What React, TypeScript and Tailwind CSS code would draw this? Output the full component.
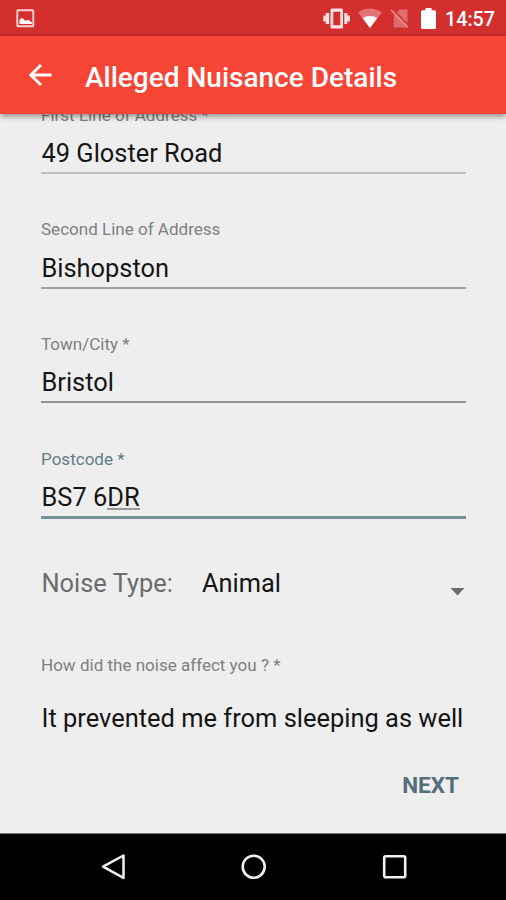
import React from "react";

function StatusBar() {
  return (
    <div className="flex h-[36px] items-center justify-between bg-[#d32f2f] pl-[16px] pr-[11px] text-white">
      <svg width="19" height="19" viewBox="0 0 19 19" fill="none">
        <rect x="1.3" y="1.3" width="16" height="16" stroke="#fbd0d2" strokeWidth="1.9" rx="0.6" />
        <path d="M3.500 14.900V11l2-1.900 1.500.4 1.500 1.800 2 .2 2-.4 2 1.500 1.400.3v2z" fill="#fff" />
      </svg>
      <div className="flex items-center">
        <svg width="27" height="21" viewBox="0 0 27 21" fill="#fbe0e0">
          <path fillRule="evenodd" d="M9 .5h9.500q1.500 0 1.500 1.500v17q0 1.500-1.500 1.500H9q-1.500 0-1.500-1.500V2Q7.500.5 9 .5zM10.300 3.800v13.400h7V3.800z" />
          <path d="M2.800 5H6.200v11H2.800zM.3 7.500h2.500v6H.3zM21.300 5h3v11h-3zM24.300 7.500h2.600v6h-2.600z" />
        </svg>
        <svg className="ml-[8px]" width="24" height="20" viewBox="0 0 24 20">
          <path d="M12 20L0 4.500C7 -1 17 -1 24 4.500z" fill="#fff" opacity=".33" />
          <path d="M12 20L4.800 10.300c4-3.200 10.400-3.200 14.400 0z" fill="#fff" />
        </svg>
        <svg className="ml-[8px]" width="20" height="21" viewBox="0 0 20 21">
          <path d="M17.500 1.500H9.500L3.800 7.200v12.300h13.700z" fill="#fff" opacity=".3" />
          <path d="M1 1.800L18 19.500" stroke="#d32f2f" strokeWidth="1.500" transform="translate(1.300 -1.300)" />
          <path d="M1 1.800L18 19.500" stroke="#e88a8a" strokeWidth="1.700" />
        </svg>
        <svg className="ml-[11px]" width="15" height="21" viewBox="0 0 15 21" fill="#fff">
          <path d="M4.500 0h6v2.200h3q1.500 0 1.500 1.500V19.500Q15 21 13.500 21h-12Q0 21 0 19.500V3.700Q0 2.200 1.500 2.200h3z" />
        </svg>
        <span className="ml-[9px] mt-[3px] w-[50px] whitespace-nowrap text-[19.7px] font-medium leading-[24px]">14:57</span>
      </div>
    </div>
  );
}

function AppBar() {
  return (
    <header className="relative z-10 flex h-[78px] items-center bg-[#f64435] pl-[28px] text-white shadow-[0_2px_6px_rgba(0,0,0,0.45)]">
      <svg className="shrink-0" width="24" height="24" viewBox="0 0 24 24" fill="none" stroke="#fff" strokeWidth="2.900">
        <path d="M23.500 12H3M13 2L2.800 12 13 22" />
      </svg>
      <h1 className="ml-[33px] mt-[5px] whitespace-nowrap text-[28px] font-medium leading-[36px]">Alleged Nuisance Details</h1>
    </header>
  );
}

type FieldProps = { label: string; line: string; labelColor?: string; children: React.ReactNode };

function Field({ label, line, labelColor = "text-[#808080]", children }: FieldProps) {
  return (
    <div className="h-[114.6px]">
      <div className={`text-[17.05px] leading-[20px] ${labelColor}`}>{label}</div>
      <div className="mt-[10.3px] h-[37px] pl-[0.5px] text-[25.4px] leading-[37px] text-[#151515]">{children}</div>
      <div className={line} />
    </div>
  );
}

export default function App() {
  return (
    <div className="flex h-[900px] w-[506px] flex-col overflow-hidden bg-[#eeeeee] font-['Roboto',sans-serif]">
      <StatusBar />
      <AppBar />
      <main className="min-h-0 flex-1 overflow-hidden pl-[41px] pr-[40px]">
        <div className="-mt-[9.2px]">
          <Field label="First Line of Address *" line="h-[2px] bg-[#c0c0c0]">49 Gloster Road</Field>
          <Field label="Second Line of Address" line="h-[2px] bg-[#a3a3a3]">Bishopston</Field>
          <Field label="Town/City *" line="h-[2px] bg-[#929292]">Bristol</Field>
          <Field label="Postcode *" labelColor="text-[#607d86]" line="h-[3px] bg-[#78909a]">
            BS7 6<span className="inline-block h-[31px] border-b-2 border-[#999] leading-[37px]">DR</span>
          </Field>
          <div className="-mt-[0.6px] flex h-[40px] items-center text-[25.4px]">
            <span className="w-[161px] pl-[0.5px] text-[#6b6b6b]">Noise Type:</span>
            <span className="flex-1 text-[#151515]">Animal</span>
            <svg className="mt-[19px]" width="16" height="8" viewBox="0 0 16 8">
              <path d="M.5 0h14L7.500 7.500z" fill="#6c6c6c" />
            </svg>
          </div>
          <div className="mt-[52.400px] text-[17.05px] leading-[20px] text-[#808080]">How did the noise affect you ? *</div>
          <div className="mt-[25.500px] whitespace-nowrap pl-[0.5px] text-[25.45px] leading-[37px] text-[#151515]">It prevented me from sleeping as well</div>
          <div className="mt-[33.500px] flex justify-end pr-[7px]">
            <button className="text-[22.5px] font-bold leading-[28px] text-[#546e7a]">NEXT</button>
          </div>
        </div>
      </main>
      <nav className="flex h-[67px] shrink-0 items-center border-t border-[#777] bg-black pl-[100px]">
        <svg width="27" height="28" viewBox="0 0 27 28" fill="none" stroke="#f0f0f0" strokeWidth="2.500">
          <path d="M23.500 2.500v22.400L3 13.700z" strokeLinejoin="round" />
        </svg>
        <svg className="ml-[113px]" width="28" height="28" viewBox="0 0 28 28" fill="none" stroke="#f0f0f0" strokeWidth="2.600">
          <circle cx="13.700" cy="13.700" r="11" />
        </svg>
        <svg className="ml-[113px]" width="28" height="28" viewBox="0 0 28 28" fill="none" stroke="#f0f0f0" strokeWidth="2.600">
          <rect x="3.200" y="3.200" width="21" height="21" rx="1.500" />
        </svg>
      </nav>
    </div>
  );
}
